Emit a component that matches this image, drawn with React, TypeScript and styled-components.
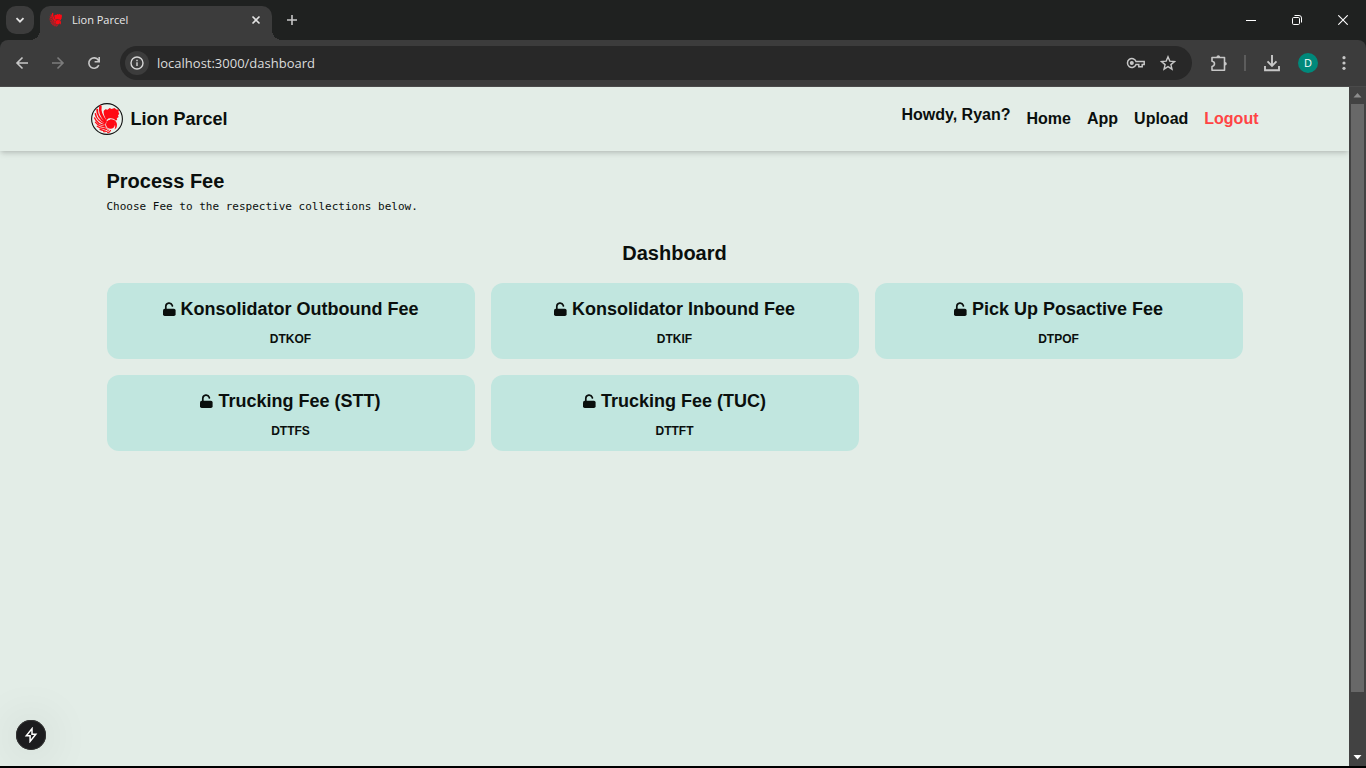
import React from "react";
import styled, { createGlobalStyle, css } from "styled-components";

const GlobalStyle = createGlobalStyle`
  *, *::before, *::after { box-sizing: border-box; }
  body { margin: 0; background: #000; }
  h1, h2, h3, p { margin: 0; }
  button, input { font: inherit; }
  a { color: inherit; text-decoration: none; }
  svg { display: block; flex: none; }
`;

const chromeFont = `"Open Sans", "Noto Sans", sans-serif`;
const pageFont = `"Liberation Sans", Arial, sans-serif`;

const Browser = styled.div`
  display: flex;
  flex-direction: column;
  height: 100vh;
  padding-bottom: 2px;
  font-family: ${chromeFont};
  background: #000;
`;

/* ---------- tab strip ---------- */

const TabStrip = styled.div`
  display: flex;
  align-items: flex-end;
  height: 40px;
  flex: none;
  padding-left: 6px;
  background: #1f2120;
`;

const plainButton = css`
  display: flex;
  align-items: center;
  justify-content: center;
  padding: 0;
  border: 0;
  background: transparent;
  cursor: pointer;
`;

const TabSearch = styled.button`
  ${plainButton}
  width: 28px;
  height: 28px;
  margin-bottom: 6px;
  border-radius: 10px;
  color: #e3e3e3;
  background: #3c3c3c;
`;

const Tab = styled.div`
  position: relative;
  display: flex;
  align-items: center;
  gap: 8px;
  width: 232px;
  height: 34px;
  margin-left: 6px;
  padding: 0 8px 6px;
  border-radius: 10px 10px 0 0;
  background: #3c3c3c;
  color: #e8e8e8;

  &::before, &::after {
    content: "";
    position: absolute;
    bottom: 0;
    width: 10px;
    height: 10px;
  }
  &::before {
    right: 100%;
    background: radial-gradient(circle at 0 0, transparent 10px, #3c3c3c 10px);
  }
  &::after {
    left: 100%;
    background: radial-gradient(circle at 100% 0, transparent 10px, #3c3c3c 10px);
  }
`;

const TabTitle = styled.span`
  flex: 1;
  font-size: 11px;
  line-height: 16px;
`;

const TabButton = styled.button`
  ${plainButton}
  width: 16px;
  height: 16px;
  color: #e3e3e3;
`;

const NewTab = styled.button`
  ${plainButton}
  width: 28px;
  height: 28px;
  margin: 0 0 6px 6px;
  color: #c7c7c7;
`;

const WindowControls = styled.div`
  display: flex;
  align-self: stretch;
  margin-left: auto;
`;

const WindowButton = styled.button`
  ${plainButton}
  width: 46px;
  color: #fff;
`;

/* ---------- toolbar ---------- */

const ToolbarBack = styled.div`
  flex: none;
  background: #1f2120;
`;

const Toolbar = styled.div`
  display: flex;
  align-items: center;
  height: 47px;
  padding: 0 8px;
  border-bottom: 1px solid #4a4a4a;
  border-radius: 8px 8px 0 0;
  background: #3c3c3c;
`;

const ToolButton = styled.button<{ $dim?: boolean; $wide?: boolean }>`
  ${plainButton}
  width: ${(p) => (p.$wide ? 32 : 28)}px;
  height: 28px;
  color: ${(p) => (p.$dim ? "#7c7c7c" : "#c7c7c7")};
`;

const NavButtons = styled.div`
  display: flex;
  gap: 8px;
  margin-right: 12px;
`;

const Omnibox = styled.div`
  display: flex;
  align-items: center;
  flex: 1;
  height: 34px;
  padding: 0 8px 0 5px;
  border-radius: 17px;
  background: #282828;
`;

const SiteInfo = styled.button`
  ${plainButton}
  width: 24px;
  height: 24px;
  border-radius: 50%;
  color: #d6d6d6;
  background: #3c3c3c;
`;

const Address = styled.input`
  flex: 1;
  min-width: 0;
  height: 24px;
  margin-left: 8px;
  padding: 0;
  border: 0;
  outline: 0;
  font-size: 13px;
  line-height: 24px;
  color: #dcdcdc;
  background: transparent;
`;

const ToolbarEnd = styled.div`
  display: flex;
  align-items: center;
  margin-left: 13px;
`;

const Separator = styled.span`
  width: 2px;
  height: 16px;
  margin: 0 12px 0 11px;
  background: #5c5c5c;
`;

const Avatar = styled.button`
  ${plainButton}
  width: 20px;
  height: 20px;
  margin: 0 12px;
  border-radius: 50%;
  font-size: 11px;
  line-height: 20px;
  color: #fff;
  background: #00897b;
`;

/* ---------- page ---------- */

const Viewport = styled.div`
  position: relative;
  display: flex;
  flex: 1;
  min-height: 0;
`;

const Page = styled.div`
  flex: 1;
  min-width: 0;
  overflow: hidden;
  font-family: ${pageFont};
  color: #0a0f0d;
  background: #e3ede7;
`;

const Header = styled.header`
  box-shadow: 0 4px 6px -1px rgba(0, 0, 0, 0.1), 0 2px 4px -1px rgba(0, 0, 0, 0.12);
`;

const Container = styled.div`
  max-width: 1200px;
  margin: 0 auto;
  padding: 0 16px;
`;

const HeaderRow = styled(Container)`
  display: flex;
  align-items: center;
  justify-content: space-between;
  height: 64px;
`;

const Brand = styled.a`
  display: flex;
  align-items: center;
  gap: 8px;
  font-size: 18px;
  font-weight: 700;
  line-height: 28px;
`;

const Nav = styled.nav`
  display: flex;
  align-items: center;
  gap: 16px;
  font-size: 16px;
  font-weight: 700;
  line-height: 24px;
`;

const Greeting = styled.p`
  padding-bottom: 8px;
`;

const NavLink = styled.a<{ $danger?: boolean }>`
  color: ${(p) => (p.$danger ? "#ff4444" : "inherit")};
`;

const Main = styled(Container)`
  padding: 16px 32px;
`;

const Title = styled.h1`
  font-size: 20px;
  line-height: 28px;
`;

const Lead = styled.p`
  margin-top: 4px;
  font-family: "DejaVu Sans Mono", monospace;
  font-size: 11px;
  line-height: 16px;
`;

const SectionTitle = styled.h2`
  margin: 24px 0 16px;
  font-size: 20px;
  line-height: 28px;
  text-align: center;
`;

const CardGrid = styled.div`
  display: grid;
  grid-template-columns: repeat(3, 1fr);
  gap: 16px;
`;

const Card = styled.a`
  display: flex;
  flex-direction: column;
  align-items: center;
  gap: 8px;
  padding: 12px 16px;
  border-radius: 12px;
  background: #c1e6df;
`;

const CardTitle = styled.h3`
  display: flex;
  align-items: center;
  gap: 5px;
  font-size: 18px;
  line-height: 28px;
`;

const CardCode = styled.p`
  font-size: 12px;
  font-weight: 700;
  line-height: 16px;
`;

const DevButton = styled.button`
  ${plainButton}
  position: absolute;
  left: 16px;
  bottom: 16px;
  width: 30px;
  height: 30px;
  border-radius: 50%;
  color: #fff;
  background: #1c1c1e;
  box-shadow: inset 0 0 0 1px #333, 0 2px 48px rgba(0, 0, 0, 0.16);
`;

const ScrollBar = styled.div`
  display: flex;
  flex-direction: column;
  align-items: center;
  width: 17px;
  background: #424242;
`;

const ScrollArrow = styled.button`
  ${plainButton}
  width: 17px;
  height: 17px;
`;

const ScrollTrack = styled.div`
  flex: 1;
  width: 13px;
`;

const ScrollThumb = styled.div`
  height: 91.2%;
  background: #686868;
`;

/* ---------- drawings ---------- */

const LionShape = () => (
  <g fill="#ff0a14">
    <path d="M12.6 8 14.400 6.300 16.600 6.800 18.600 5 20.600 5.900 23.600 5 25.400 6.400 28 6.600 27.400 8.800 28.200 11 27 12.200 27.600 14 25.800 15.200 26.200 17 24.600 17.400C23 15.400 20 14.800 17.400 15.600L15.400 17.200C13.600 14 12.400 11 12.600 8Z" />
    <circle cx="19.500" cy="21.300" r="4.500" />
    <g fill="none" stroke="#ff0a14" strokeLinecap="round">
      <path d="M9.400 3.600C8.400 8.500 11 14 14.600 18" strokeWidth="2.600" />
      <path d="M6.200 6.600C5.800 11.500 9.400 16.600 14 19.400" strokeWidth="1.900" />
      <path d="M4.400 10.800C5 15.200 9 19.200 13.800 20.800" strokeWidth="1.500" />
      <path d="M3.600 15C5.400 19 9.400 21.800 13.800 22.200" strokeWidth="1.400" />
      <path d="M4.400 19.200C7 22.600 10.500 23.800 14.200 23.600" strokeWidth="1.200" />
      <path d="M6.200 23.200C9 25.400 12.400 25.800 15 24.900" strokeWidth="1.200" />
      <path d="M9 26.400C11.500 27.600 14.300 27.400 16.200 26.100" strokeWidth="1.200" />
      <path d="M12.600 28.600C14.600 28.900 16.600 28.200 17.700 27" strokeWidth="1.100" />
      <path d="M16.600 29.600C18 29.400 19 28.600 19.500 27.500" strokeWidth="1.100" />
    </g>
    <path d="M19.200 16.300C24.500 15.800 27.400 20.500 25.400 24.800L23.600 26.400C25.400 22 23.400 17.900 19.200 17.500Z" />
  </g>
);

const Logo = () => (
  <svg width="32" height="32" viewBox="0 0 32 32" aria-hidden="true">
    <circle cx="16" cy="16" r="15.400" fill="#eaf2ed" stroke="#111" strokeWidth="1.100" />
    <LionShape />
  </svg>
);

const Favicon = () => (
  <svg width="16" height="16" viewBox="0 1 32 32" aria-hidden="true">
    <LionShape />
  </svg>
);

const UnlockIcon = () => (
  <svg width="13" height="14" viewBox="0 0 13 14" aria-hidden="true">
    <rect y="6.800" width="12.600" height="7.200" rx="1.700" fill="currentColor" />
    <path d="M2.800 7.500V4.200A3.300 3.300 0 0 1 9.200 3.300L9.400 4" fill="none" stroke="currentColor" strokeWidth="1.700" strokeLinecap="round" />
  </svg>
);

type StrokeProps = { size: number; d: string; width?: number };
const Stroke = ({ size, d, width = 1.6 }: StrokeProps) => (
  <svg width={size} height={size} viewBox={`0 0 ${size} ${size}`} fill="none" stroke="currentColor" strokeWidth={width} aria-hidden="true">
    <path d={d} />
  </svg>
);

const cards = [
  { name: "Konsolidator Outbound Fee", code: "DTKOF" },
  { name: "Konsolidator Inbound Fee", code: "DTKIF" },
  { name: "Pick Up Posactive Fee", code: "DTPOF" },
  { name: "Trucking Fee (STT)", code: "DTTFS" },
  { name: "Trucking Fee (TUC)", code: "DTTFT" },
];

export default function App() {
  return (
    <Browser>
      <GlobalStyle />
      <TabStrip>
        <TabSearch aria-label="Search tabs">
          <Stroke size={12} d="M2.5 4.2 6 7.7l3.5-3.5" width={1.8} />
        </TabSearch>
        <Tab>
          <Favicon />
          <TabTitle>Lion Parcel</TabTitle>
          <TabButton aria-label="Close tab">
            <Stroke size={16} d="m4.5 4.5 7 7m0-7-7 7" />
          </TabButton>
        </Tab>
        <NewTab aria-label="New tab">
          <Stroke size={12} d="M6 1v10M1 6h10" />
        </NewTab>
        <WindowControls>
          <WindowButton aria-label="Minimize">
            <Stroke size={10} d="M0 5.5h10" width={1} />
          </WindowButton>
          <WindowButton aria-label="Restore">
            <svg width="10" height="10" viewBox="0 0 10 10" fill="none" stroke="currentColor" aria-hidden="true">
              <rect x="0.5" y="2.5" width="7" height="7" rx="1.2" />
              <path d="M2.5.5H7A2.5 2.5 0 0 1 9.5 3v4.5" />
            </svg>
          </WindowButton>
          <WindowButton aria-label="Close">
            <Stroke size={10} d="m.3.3 9.4 9.4m0-9.4L.3 9.7" width={1.1} />
          </WindowButton>
        </WindowControls>
      </TabStrip>

      <ToolbarBack>
        <Toolbar>
          <NavButtons>
            <ToolButton aria-label="Back">
              <Stroke size={14} d="M13 7H2m5.5-5.5L2 7l5.5 5.5" />
            </ToolButton>
            <ToolButton $dim aria-label="Forward">
              <Stroke size={14} d="M1 7h11M6.5 1.5 12 7l-5.5 5.5" />
            </ToolButton>
            <ToolButton aria-label="Reload">
              <Stroke size={14} d="M11.8 9.2A5.2 5.2 0 1 1 11.4 4.2L12 5M12.2 1v4.7H7.6" />
            </ToolButton>
          </NavButtons>
          <Omnibox>
            <SiteInfo aria-label="Site information">
              <svg width="14" height="14" viewBox="0 0 14 14" fill="none" stroke="currentColor" strokeWidth="1.4" aria-hidden="true">
                <circle cx="7" cy="7" r="6" />
                <path d="M7 6.2V10M7 3.8v1.4" />
              </svg>
            </SiteInfo>
            <Address aria-label="Address" defaultValue="localhost:3000/dashboard" />
            <ToolButton $wide aria-label="Passwords">
              <svg width="20" height="12" viewBox="0 0 20 12" fill="none" stroke="currentColor" strokeWidth="1.5" aria-hidden="true">
                <path d="M10 4.500a4.400 4.400 0 1 0 0 3h2.800v2.300h3.400V7.500h2V4.500Z" />
                <circle cx="5.800" cy="6" r="1.300" fill="currentColor" />
              </svg>
            </ToolButton>
            <ToolButton $wide aria-label="Bookmark this page">
              <Stroke size={16} d="m8 1.8 1.8 4.3 4.7.4-3.6 3.1 1.1 4.6L8 11.700l-4 2.500 1.100-4.600-3.600-3.100 4.700-.4Z" width={1.4} />
            </ToolButton>
          </Omnibox>
          <ToolbarEnd>
            <ToolButton aria-label="Extensions">
              <svg width="18" height="18" viewBox="0 0 18 18" fill="none" stroke="currentColor" strokeWidth="1.6" strokeLinejoin="round" aria-hidden="true">
                <path d="M2 3.500h12.500v12.700H2v-3.700c3.300-.5 3.300-4.800 0-5.300Z" />
                <path d="M6.500 3a1.800 1.800 0 0 1 3.600 0ZM15 8a1.800 1.800 0 0 1 0 3.600Z" fill="currentColor" stroke="none" />
              </svg>
            </ToolButton>
            <Separator />
            <ToolButton aria-label="Downloads">
              <Stroke size={18} d="M9 1v10.5M4.5 7.300 9 11.800l4.500-4.500M2 12v4.200h14V12" width={1.9} />
            </ToolButton>
            <Avatar aria-label="Profile">D</Avatar>
            <ToolButton aria-label="Menu">
              <svg width="4" height="14" viewBox="0 0 4 14" fill="currentColor" aria-hidden="true">
                <circle cx="2" cy="1.700" r="1.600" />
                <circle cx="2" cy="7" r="1.600" />
                <circle cx="2" cy="12.300" r="1.600" />
              </svg>
            </ToolButton>
          </ToolbarEnd>
        </Toolbar>
      </ToolbarBack>

      <Viewport>
        <Page>
          <Header>
            <HeaderRow>
              <Brand href="#home">
                <Logo />
                Lion Parcel
              </Brand>
              <Nav>
                <Greeting>Howdy, Ryan?</Greeting>
                <NavLink href="#home">Home</NavLink>
                <NavLink href="#app">App</NavLink>
                <NavLink href="#upload">Upload</NavLink>
                <NavLink $danger href="#logout">Logout</NavLink>
              </Nav>
            </HeaderRow>
          </Header>
          <Main as="main">
            <Title>Process Fee</Title>
            <Lead>Choose Fee to the respective collections below.</Lead>
            <SectionTitle>Dashboard</SectionTitle>
            <CardGrid>
              {cards.map((card) => (
                <Card key={card.code} href={`#${card.code}`}>
                  <CardTitle>
                    <UnlockIcon />
                    {card.name}
                  </CardTitle>
                  <CardCode>{card.code}</CardCode>
                </Card>
              ))}
            </CardGrid>
          </Main>
        </Page>
        <ScrollBar>
          <ScrollArrow aria-label="Scroll up" tabIndex={-1}>
            <svg width="9" height="5" viewBox="0 0 9 5" fill="#8c8c8c" aria-hidden="true">
              <path d="M4.500 0 8.500 4.500h-8Z" />
            </svg>
          </ScrollArrow>
          <ScrollTrack>
            <ScrollThumb />
          </ScrollTrack>
          <ScrollArrow aria-label="Scroll down" tabIndex={-1}>
            <svg width="9" height="5" viewBox="0 0 9 5" fill="#fff" aria-hidden="true">
              <path d="M4.500 4.500 8.500 0h-8Z" />
            </svg>
          </ScrollArrow>
        </ScrollBar>
        <DevButton aria-label="Open developer tools">
          <Stroke size={16} d="M9 1.600 3.300 8.700h3.800v5.700L12.800 7.300H9Z" width={1.5} />
        </DevButton>
      </Viewport>
    </Browser>
  );
}
